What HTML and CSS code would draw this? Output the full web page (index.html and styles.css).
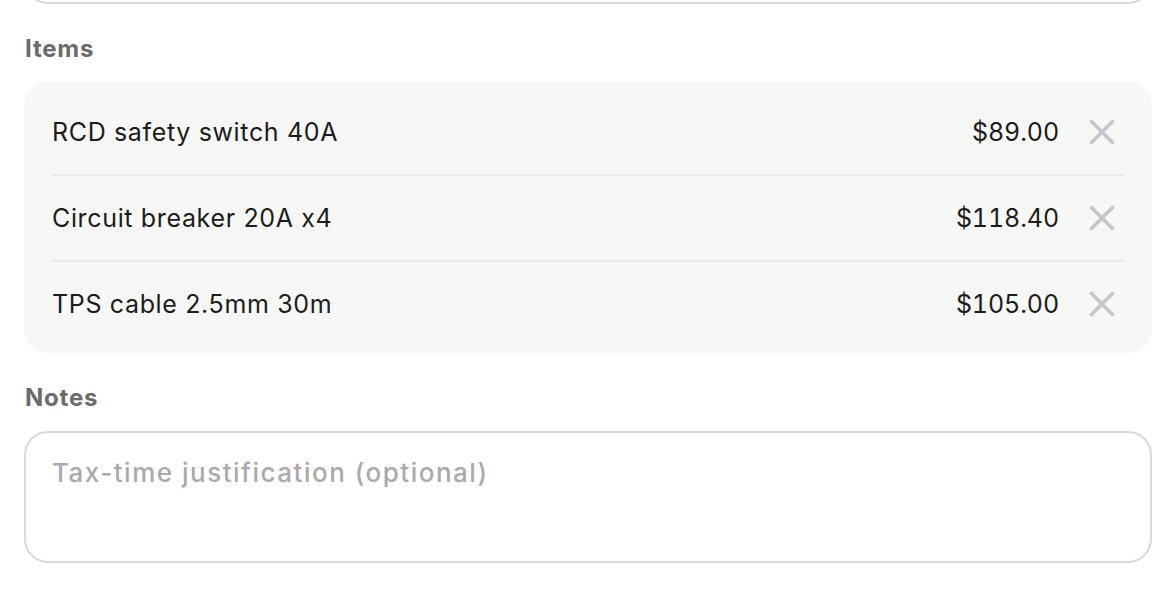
FILE: index.html
```html
<!DOCTYPE html>
<html lang="en">
<head>
<meta charset="utf-8">
<title>Items</title>
<link rel="stylesheet" href="styles.css">
</head>
<body>
<div class="form">
  <div class="prev-field"></div>

  <section class="section">
    <h2 class="label">Items</h2>
    <div class="items">
      <div class="item">
        <span class="item-name">RCD safety switch 40A</span>
        <span class="item-price">$89.00</span>
        <button class="remove" type="button" aria-label="Remove">
          <svg viewBox="0 0 28 28" width="28" height="28"><path d="M3.5 3.5 L24.5 24.5 M24.5 3.5 L3.5 24.5"/></svg>
        </button>
      </div>
      <div class="item">
        <span class="item-name">Circuit breaker 20A x4</span>
        <span class="item-price">$118.40</span>
        <button class="remove" type="button" aria-label="Remove">
          <svg viewBox="0 0 28 28" width="28" height="28"><path d="M3.5 3.5 L24.5 24.5 M24.5 3.5 L3.5 24.5"/></svg>
        </button>
      </div>
      <div class="item">
        <span class="item-name">TPS cable 2.5mm 30m</span>
        <span class="item-price">$105.00</span>
        <button class="remove" type="button" aria-label="Remove">
          <svg viewBox="0 0 28 28" width="28" height="28"><path d="M3.5 3.5 L24.5 24.5 M24.5 3.5 L3.5 24.5"/></svg>
        </button>
      </div>
    </div>
  </section>

  <section class="section">
    <h2 class="label">Notes</h2>
    <textarea class="notes" placeholder="Tax-time justification (optional)"></textarea>
  </section>
</div>
</body>
</html>
```

FILE: styles.css
```css
* {
  box-sizing: border-box;
}

html, body {
  margin: 0;
  padding: 0;
  background: #ffffff;
}

body {
  font-family: Inter, "Liberation Sans", sans-serif;
  color: #1c1c1c;
  overflow: hidden;
}

.form {
  padding: 0 24px;
  display: flex;
  flex-direction: column;
}

.prev-field {
  height: 60px;
  margin-top: -56px;
  border: 2px solid #d9d9d9;
  border-radius: 24px;
  background: #ffffff;
}

.section {
  margin-top: 30px;
  display: flex;
  flex-direction: column;
}

.label {
  margin: 0 0 18px 1px;
  font-size: 24px;
  line-height: 30px;
  font-weight: 700;
  color: #6b6b6b;
  letter-spacing: 0.8px;
}

.items {
  background: #f7f7f5;
  border-radius: 24px;
  padding: 8px 28px 7px 28px;
  display: flex;
  flex-direction: column;
}

.item {
  height: 84px;
  display: flex;
  align-items: center;
  gap: 21px;
}

.item + .item {
  border-top: 2px solid #ebebe9;
  height: 86px;
}

.item-name {
  flex: 1;
  font-size: 25px;
  line-height: 32px;
  letter-spacing: 0.65px;
  color: #1c1c1c;
}

.item-price {
  font-size: 25px;
  line-height: 32px;
  letter-spacing: -0.1px;
  font-feature-settings: "tnum" 1;
  color: #1c1c1c;
}

.remove {
  width: 44px;
  height: 44px;
  padding: 0;
  border: none;
  background: transparent;
  display: flex;
  align-items: center;
  justify-content: center;
  cursor: pointer;
}

.remove svg {
  display: block;
}

.remove path {
  fill: none;
  stroke: #c6c6ca;
  stroke-width: 3.6;
  stroke-linecap: round;
}

.notes {
  display: block;
  width: 100%;
  height: 132px;
  border: 2px solid #d9d9d9;
  border-radius: 24px;
  padding: 23px 26px;
  font-family: Inter, "Liberation Sans", sans-serif;
  font-size: 26px;
  font-weight: 500;
  line-height: 34px;
  letter-spacing: 1.5px;
  color: #1c1c1c;
  background: #ffffff;
  resize: none;
  outline: none;
}

.notes::placeholder {
  color: #a9a9ae;
  opacity: 1;
}
```
